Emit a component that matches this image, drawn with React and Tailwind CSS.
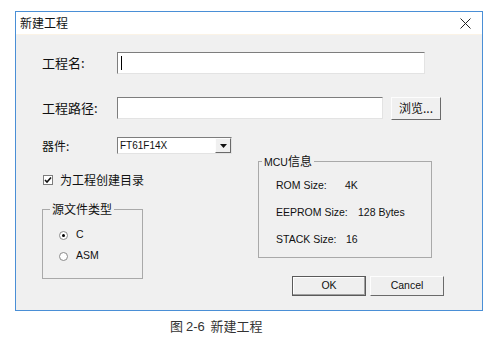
import React from "react";

const cjk = "font-['Noto_Sans_CJK_SC',sans-serif]";
const en = "font-['Liberation_Sans','Noto_Sans_CJK_SC',sans-serif]";

function Sunken({ className, children }) {
  return (
    <div className={"bg-white border-t border-l border-t-[#7d7d7d] border-l-[#7d7d7d] border-b border-r border-b-[#e3e3e3] border-r-[#e3e3e3] " + className}>
      {children}
    </div>
  );
}

function Radio({ checked, label }) {
  return (
    <div className="flex items-center h-[12px]">
      <span className="w-[9px] h-[9px] rounded-full bg-white border border-[#8a8a8a] flex items-center justify-center">
        {checked && <span className="w-[3px] h-[3px] rounded-full bg-black" />}
      </span>
      <span className={"ml-[8px] text-[10.5px] text-[#111] " + en}>{label}</span>
    </div>
  );
}

function InfoRow({ label, value, width, className }) {
  return (
    <div className={"flex items-center h-[14px] text-[10.5px] text-[#111] " + en + " " + className}>
      <span style={{ width }}>{label}</span>
      <span>{value}</span>
    </div>
  );
}

export default function App() {
  return (
    <div className={"w-[503px] h-[348px] bg-white overflow-hidden " + cjk}>
      {/* 对话框 */}
      <div className="ml-[15px] mt-[11px] w-[468px] h-[300px] border border-[#4a8fd6] flex flex-col">
        <div className="h-[23px] bg-white flex items-center justify-between pl-[4px] pr-[11px] border-b border-b-[#fbf3e6]">
          <span className="text-[12px] text-[#111]">新建工程</span>
          <svg width="11" height="11" viewBox="0 0 11 11">
            <path d="M0.5 0.5 L10.5 10.5 M10.5 0.5 L0.5 10.5" stroke="#222" strokeWidth="1" />
          </svg>
        </div>

        <div className="flex-1 bg-[#f0f0f0] pl-[26px]">
          {/* 工程名 */}
          <div className="mt-[17px] flex items-center h-[22px]">
            <span className="w-[75px] text-[13px] text-[#111]">工程名:</span>
            <Sunken className="w-[308px] h-[22px] flex items-center pl-[3px]">
              <span className="w-px h-[14px] bg-black" />
            </Sunken>
          </div>

          {/* 工程路径 */}
          <div className="mt-[23px] flex items-center h-[22px]">
            <span className="w-[75px] text-[13px] text-[#111]">工程路径:</span>
            <Sunken className="w-[266px] h-[22px]" />
            <button className="ml-[8px] w-[50px] h-[23px] bg-[#f0f0f0] border border-t-[#fdfdfd] border-l-[#fdfdfd] border-b-[#6a6a6a] border-r-[#6a6a6a] text-[12px] text-[#111] flex items-center justify-center">
              浏览...
            </button>
          </div>

          <div className="mt-[18px] flex">
            {/* 左侧 */}
            <div className="w-[216px] flex flex-col">
              <div className="flex items-center h-[17px]">
                <span className="w-[75px] text-[12px] text-[#111]">器件:</span>
                <div className="w-[115px] h-[17px] flex bg-white border-t border-l border-t-[#7d7d7d] border-l-[#7d7d7d] border-b border-r border-b-[#e3e3e3] border-r-[#e3e3e3]">
                  <span className={"flex-1 pl-[2px] text-[10px] leading-[15px] text-[#111] " + en}>FT61F14X</span>
                  <span className="w-[16px] h-full bg-[#f0f0f0] border border-t-[#fdfdfd] border-l-[#fdfdfd] border-b-[#6a6a6a] border-r-[#6a6a6a] flex items-center justify-center">
                    <svg width="7" height="4" viewBox="0 0 7 4">
                      <path d="M0 0 H7 L3.5 4 Z" fill="#111" />
                    </svg>
                  </span>
                </div>
              </div>

              <div className="mt-[20px] flex items-center h-[12px]">
                <span className="ml-[1px] w-[10px] h-[10px] bg-white border border-[#7d7d7d] flex items-center justify-center">
                  <svg width="8" height="8" viewBox="0 0 8 8">
                    <path d="M1 4 L3 6 L7 1.5" stroke="#111" strokeWidth="1.6" fill="none" />
                  </svg>
                </span>
                <span className="ml-[7px] text-[12px] text-[#111]">为工程创建目录</span>
              </div>

              <fieldset className="mt-[16px] w-[101px] h-[77px] border border-[#a9a9a9] pl-[16px]">
                <legend className="ml-[-9px] px-[2px] text-[12px] leading-[14px] text-[#111]">源文件类型</legend>
                <div className="mt-[13px]">
                  <Radio checked label="C" />
                </div>
                <div className="mt-[9px]">
                  <Radio label="ASM" />
                </div>
              </fieldset>
            </div>

            {/* 右侧 */}
            <div className="flex flex-col">
              <fieldset className="mt-[17px] w-[174px] h-[104px] border border-[#a9a9a9] pl-[17px]">
                <legend className="ml-[-14px] px-[2px] text-[12px] leading-[14px] text-[#111]">
                  <span className={"text-[10.5px] " + en}>MCU</span>信息
                </legend>
                <InfoRow className="mt-[10px]" label="ROM Size:" value="4K" width={69} />
                <InfoRow className="mt-[13px]" label="EEPROM Size:" value="128 Bytes" width={82} />
                <InfoRow className="mt-[13px]" label="STACK Size:" value="16" width={70} />
              </fieldset>

              <div className="mt-[18px] ml-[34px] flex gap-[4px]">
                <button className={"w-[74px] h-[20px] bg-[#efefef] border border-[#5a5a5a] shadow-[inset_-1px_-1px_0_#a0a0a0,inset_1px_1px_0_#ffffff] text-[10.5px] text-[#111] " + en}>
                  OK
                </button>
                <button className={"w-[74px] h-[20px] bg-[#efefef] border border-t-[#fdfdfd] border-l-[#fdfdfd] border-b-[#6a6a6a] border-r-[#6a6a6a] text-[10.5px] text-[#111] " + en}>
                  Cancel
                </button>
              </div>
            </div>
          </div>
        </div>
      </div>

      <div className="mt-[7px] pl-[170px] text-[13px] leading-[16px] text-[#333]">
        图 <span className={en}>2-6</span>&nbsp;&nbsp;新建工程
      </div>
    </div>
  );
}
